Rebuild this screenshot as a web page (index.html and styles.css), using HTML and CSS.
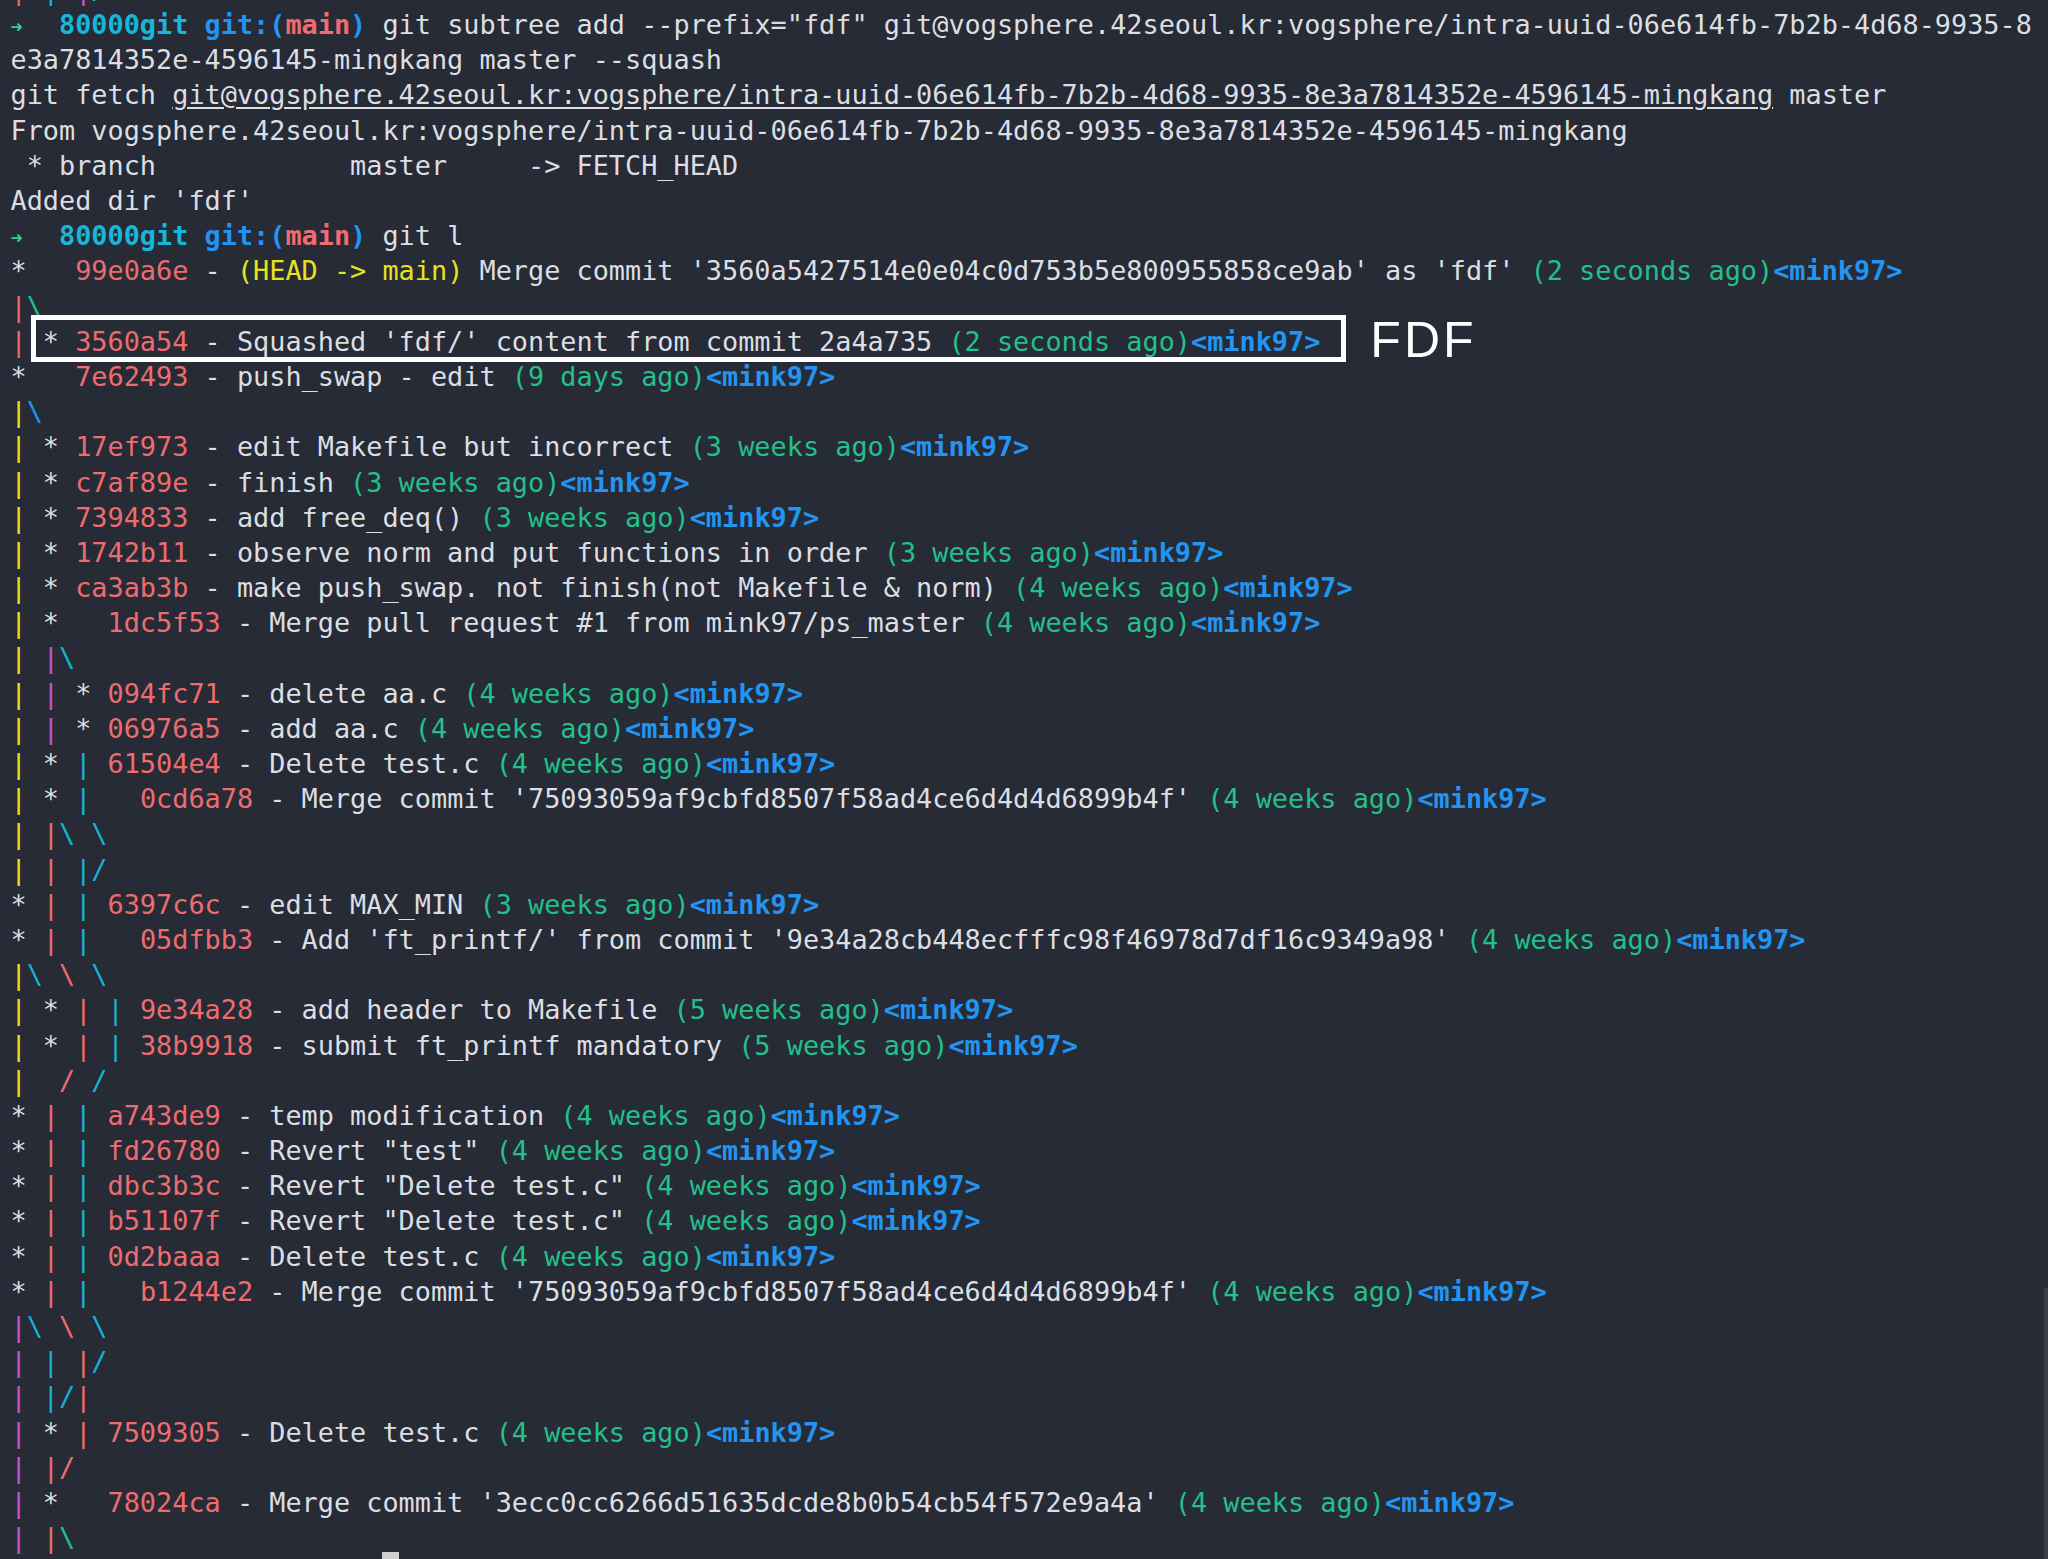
FILE: index.html
```html
<!DOCTYPE html>
<html lang="en">
<head>
<meta charset="utf-8">
<title>git l</title>
<link rel="stylesheet" href="styles.css">
</head>
<body>
<div class="term">
<div class="line"><span class="red">|</span> <span class="cyn">|</span> <span class="mag">|</span><span class="grn">/</span></div>
<div class="line"><span class="arrow">➜</span>  <span class="dir">80000git</span> <span class="git">git:(</span><span class="brn">main</span><span class="git">)</span> git subtree add --prefix="fdf" git@vogsphere.42seoul.kr:vogsphere/intra-uuid-06e614fb-7b2b-4d68-9935-8</div>
<div class="line">e3a7814352e-4596145-mingkang master --squash</div>
<div class="line">git fetch <span class="ul">git@vogsphere.42seoul.kr:vogsphere/intra-uuid-06e614fb-7b2b-4d68-9935-8e3a7814352e-4596145-mingkang</span> master</div>
<div class="line">From vogsphere.42seoul.kr:vogsphere/intra-uuid-06e614fb-7b2b-4d68-9935-8e3a7814352e-4596145-mingkang</div>
<div class="line"> * branch            master     -&gt; FETCH_HEAD</div>
<div class="line">Added dir 'fdf'</div>
<div class="line"><span class="arrow">➜</span>  <span class="dir">80000git</span> <span class="git">git:(</span><span class="brn">main</span><span class="git">)</span> git l</div>
<div class="line">*   <span class="hash">99e0a6e</span> - <span class="ref">(HEAD -&gt; main)</span> Merge commit '3560a5427514e0e04c0d753b5e800955858ce9ab' as 'fdf' <span class="ago">(2 seconds ago)</span><span class="who">&lt;mink97&gt;</span></div>
<div class="line"><span class="red">|</span><span class="grn">\</span></div>
<div class="line"><span class="red">|</span> <span class="annot">* <span class="hash">3560a54</span> - Squashed 'fdf/' content from commit 2a4a735 <span class="ago">(2 seconds ago)</span><span class="who">&lt;mink97&gt;</span><span class="box"></span><span class="label">FDF</span></span></div>
<div class="line">*   <span class="hash">7e62493</span> - push_swap - edit <span class="ago">(9 days ago)</span><span class="who">&lt;mink97&gt;</span></div>
<div class="line"><span class="yel">|</span><span class="blu">\</span></div>
<div class="line"><span class="yel">|</span> * <span class="hash">17ef973</span> - edit Makefile but incorrect <span class="ago">(3 weeks ago)</span><span class="who">&lt;mink97&gt;</span></div>
<div class="line"><span class="yel">|</span> * <span class="hash">c7af89e</span> - finish <span class="ago">(3 weeks ago)</span><span class="who">&lt;mink97&gt;</span></div>
<div class="line"><span class="yel">|</span> * <span class="hash">7394833</span> - add free_deq() <span class="ago">(3 weeks ago)</span><span class="who">&lt;mink97&gt;</span></div>
<div class="line"><span class="yel">|</span> * <span class="hash">1742b11</span> - observe norm and put functions in order <span class="ago">(3 weeks ago)</span><span class="who">&lt;mink97&gt;</span></div>
<div class="line"><span class="yel">|</span> * <span class="hash">ca3ab3b</span> - make push_swap. not finish(not Makefile &amp; norm) <span class="ago">(4 weeks ago)</span><span class="who">&lt;mink97&gt;</span></div>
<div class="line"><span class="yel">|</span> *   <span class="hash">1dc5f53</span> - Merge pull request #1 from mink97/ps_master <span class="ago">(4 weeks ago)</span><span class="who">&lt;mink97&gt;</span></div>
<div class="line"><span class="yel">|</span> <span class="mag">|</span><span class="cyn">\</span></div>
<div class="line"><span class="yel">|</span> <span class="mag">|</span> * <span class="hash">094fc71</span> - delete aa.c <span class="ago">(4 weeks ago)</span><span class="who">&lt;mink97&gt;</span></div>
<div class="line"><span class="yel">|</span> <span class="mag">|</span> * <span class="hash">06976a5</span> - add aa.c <span class="ago">(4 weeks ago)</span><span class="who">&lt;mink97&gt;</span></div>
<div class="line"><span class="yel">|</span> * <span class="cyn">|</span> <span class="hash">61504e4</span> - Delete test.c <span class="ago">(4 weeks ago)</span><span class="who">&lt;mink97&gt;</span></div>
<div class="line"><span class="yel">|</span> * <span class="cyn">|</span>   <span class="hash">0cd6a78</span> - Merge commit '75093059af9cbfd8507f58ad4ce6d4d4d6899b4f' <span class="ago">(4 weeks ago)</span><span class="who">&lt;mink97&gt;</span></div>
<div class="line"><span class="yel">|</span> <span class="red">|</span><span class="cyn">\</span> <span class="cyn">\</span></div>
<div class="line"><span class="yel">|</span> <span class="red">|</span> <span class="cyn">|</span><span class="cyn">/</span></div>
<div class="line">* <span class="red">|</span> <span class="cyn">|</span> <span class="hash">6397c6c</span> - edit MAX_MIN <span class="ago">(3 weeks ago)</span><span class="who">&lt;mink97&gt;</span></div>
<div class="line">* <span class="red">|</span> <span class="cyn">|</span>   <span class="hash">05dfbb3</span> - Add 'ft_printf/' from commit '9e34a28cb448ecfffc98f46978d7df16c9349a98' <span class="ago">(4 weeks ago)</span><span class="who">&lt;mink97&gt;</span></div>
<div class="line"><span class="yel">|</span><span class="cyn">\</span> <span class="red">\</span> <span class="cyn">\</span></div>
<div class="line"><span class="yel">|</span> * <span class="red">|</span> <span class="cyn">|</span> <span class="hash">9e34a28</span> - add header to Makefile <span class="ago">(5 weeks ago)</span><span class="who">&lt;mink97&gt;</span></div>
<div class="line"><span class="yel">|</span> * <span class="red">|</span> <span class="cyn">|</span> <span class="hash">38b9918</span> - submit ft_printf mandatory <span class="ago">(5 weeks ago)</span><span class="who">&lt;mink97&gt;</span></div>
<div class="line"><span class="yel">|</span>  <span class="red">/</span> <span class="cyn">/</span></div>
<div class="line">* <span class="red">|</span> <span class="cyn">|</span> <span class="hash">a743de9</span> - temp modification <span class="ago">(4 weeks ago)</span><span class="who">&lt;mink97&gt;</span></div>
<div class="line">* <span class="red">|</span> <span class="cyn">|</span> <span class="hash">fd26780</span> - Revert "test" <span class="ago">(4 weeks ago)</span><span class="who">&lt;mink97&gt;</span></div>
<div class="line">* <span class="red">|</span> <span class="cyn">|</span> <span class="hash">dbc3b3c</span> - Revert "Delete test.c" <span class="ago">(4 weeks ago)</span><span class="who">&lt;mink97&gt;</span></div>
<div class="line">* <span class="red">|</span> <span class="cyn">|</span> <span class="hash">b51107f</span> - Revert "Delete test.c" <span class="ago">(4 weeks ago)</span><span class="who">&lt;mink97&gt;</span></div>
<div class="line">* <span class="red">|</span> <span class="cyn">|</span> <span class="hash">0d2baaa</span> - Delete test.c <span class="ago">(4 weeks ago)</span><span class="who">&lt;mink97&gt;</span></div>
<div class="line">* <span class="red">|</span> <span class="cyn">|</span>   <span class="hash">b1244e2</span> - Merge commit '75093059af9cbfd8507f58ad4ce6d4d4d6899b4f' <span class="ago">(4 weeks ago)</span><span class="who">&lt;mink97&gt;</span></div>
<div class="line"><span class="mag">|</span><span class="cyn">\</span> <span class="red">\</span> <span class="cyn">\</span></div>
<div class="line"><span class="mag">|</span> <span class="cyn">|</span> <span class="red">|</span><span class="cyn">/</span></div>
<div class="line"><span class="mag">|</span> <span class="cyn">|</span><span class="cyn">/</span><span class="red">|</span></div>
<div class="line"><span class="mag">|</span> * <span class="red">|</span> <span class="hash">7509305</span> - Delete test.c <span class="ago">(4 weeks ago)</span><span class="who">&lt;mink97&gt;</span></div>
<div class="line"><span class="mag">|</span> <span class="red">|</span><span class="red">/</span></div>
<div class="line"><span class="mag">|</span> *   <span class="hash">78024ca</span> - Merge commit '3ecc0cc6266d51635dcde8b0b54cb54f572e9a4a' <span class="ago">(4 weeks ago)</span><span class="who">&lt;mink97&gt;</span></div>
<div class="line"><span class="mag">|</span> <span class="red">|</span><span class="grn">\</span></div>
<div class="line">                       <span class="cursor"> </span></div>
</div>
<div class="scrollbar"></div>
</body>
</html>
```

FILE: styles.css
```css
html, body {
  margin: 0;
  padding: 0;
  width: 2048px;
  height: 1559px;
  overflow: hidden;
  background: #262b35;
}

body {
  position: relative;
}

.term {
  margin-top: -28.1px;
  padding-left: 10.5px;
  font-family: "DejaVu Sans Mono", "Liberation Mono", monospace;
  font-size: 26.875px;
  line-height: 35.2px;
  color: #dcdee3;
}

.line {
  height: 35.2px;
  white-space: pre;
}

.red { color: #ee6b70; }
.grn { color: #23c08b; }
.yel { color: #e6e31e; }
.blu { color: #2294f2; }
.mag { color: #c652d6; }
.cyn { color: #17b3d5; }

.hash { color: #ee6b70; }
.ref { color: #e6e31e; }
.ago { color: #23c08b; }
.who { color: #2294f2; font-weight: bold; }

.arrow {
  display: inline-block;
  width: 16.18px;
  color: #2ed38e;
  font-weight: bold;
  font-size: 0.75em;
}
.dir { color: #18b6d8; font-weight: bold; }
.git { color: #2294f2; font-weight: bold; }
.brn { color: #ee6b70; font-weight: bold; }

.ul { text-decoration: underline; text-underline-offset: 3px; }

.annot {
  position: relative;
}

.box {
  position: absolute;
  left: -11.9px;
  right: -26px;
  top: -10.9px;
  bottom: -5.4px;
  border: 5px solid #ffffff;
}

.label {
  position: absolute;
  left: calc(100% + 50px);
  top: -11.1px;
  font-family: "Liberation Sans", Arial, sans-serif;
  font-size: 50px;
  line-height: 50px;
  letter-spacing: 3px;
  color: #ffffff;
}

.cursor {
  display: inline-block;
  width: 1ch;
  height: 30px;
  margin-top: -3px;
  vertical-align: top;
  background: #d0d0d0;
}

.scrollbar {
  position: absolute;
  right: 0;
  top: 1288px;
  bottom: 0;
  width: 4px;
  background: #3a3f49;
}
```
